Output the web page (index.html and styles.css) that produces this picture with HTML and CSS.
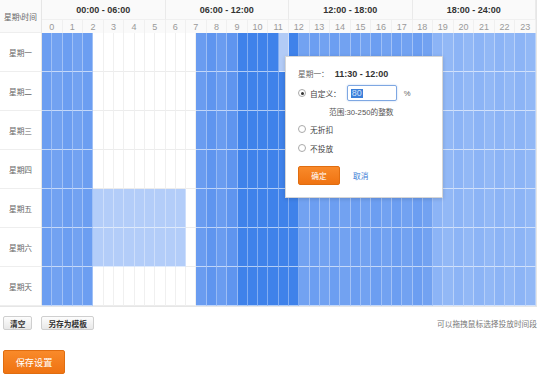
FILE: index.html
```html
<!DOCTYPE html>
<html lang="zh-CN">
<head>
    <meta charset="UTF-8">
    <meta name="viewport" content="width=device-width, initial-scale=1.0">
    <title>投放时间段</title>
    <link rel="stylesheet" href="styles.css">
</head>
<body>
    <div class="scheduler">
        <div class="grid" id="grid">
            <div class="corner">星期\时间</div>
            <div class="range">00:00 - 06:00</div>
            <div class="range">06:00 - 12:00</div>
            <div class="range">12:00 - 18:00</div>
            <div class="range">18:00 - 24:00</div>
        </div>

        <div class="popup">
            <div class="pop-title"><span>星期一：</span><b>11:30 - 12:00</b></div>
            <div class="opt opt-custom">
                <span class="radio checked"></span>
                <span>自定义：</span>
                <span class="fake-input"><span class="sel">80</span></span>
                <span class="pct">%</span>
            </div>
            <div class="range-hint">范围:30-250的整数</div>
            <div class="opt opt-free"><span class="radio"></span><span>无折扣</span></div>
            <div class="opt opt-off"><span class="radio"></span><span>不投放</span></div>
            <div class="pop-actions">
                <button type="button" class="btn-orange btn-ok">确定</button>
                <a href="#" class="link-cancel">取消</a>
            </div>
        </div>
    </div>

    <div class="toolbar">
        <div class="left-group">
            <button type="button" class="btn">清空</button>
            <button type="button" class="btn">另存为模板</button>
        </div>
        <div class="tip">可以拖拽鼠标选择投放时间段</div>
    </div>

    <button type="button" class="btn-orange btn-save">保存设置</button>

    <script>
        var days = ['星期一', '星期二', '星期三', '星期四', '星期五', '星期六', '星期天'];
        var grid = document.getElementById('grid');

        for (var h = 0; h < 24; h++) {
            var hour = document.createElement('div');
            hour.className = 'hour';
            hour.textContent = h;
            grid.appendChild(hour);
        }

        // rough discount levels per half hour
        function level(d, c) {
            if (c <= 4) return 'lv-mid';
            if (c <= 13) return (d == 4 || d == 5) ? 'lv-pale' : '';
            if (c == 14) return '';
            if (c <= 18) return 'lv-mid2';
            if (c <= 24) {
                if (d == 0 && c == 23) return 'lv-picked';
                return 'lv-dark';
            }
            if (c <= 37) return 'lv-mid';
            return 'lv-light';
        }

        for (var d = 0; d < days.length; d++) {
            var label = document.createElement('div');
            label.className = 'day';
            label.textContent = days[d];
            grid.appendChild(label);
            for (var c = 0; c < 48; c++) {
                var cell = document.createElement('div');
                var lv = level(d, c);
                cell.className = 'cell' + (lv ? ' on ' + lv : '') + (c % 2 ? ' odd' : '');
                grid.appendChild(cell);
            }
        }
    </script>
</body>
</html>
```

FILE: styles.css
```css
body {
    margin: 0;
    font-family: "Liberation Sans", "Noto Sans CJK SC", sans-serif;
    font-size: 7.7px;
    color: #555;
    background-color: #fff;
}
.scheduler {
    position: relative;
    width: 537px;
}
.grid {
    display: grid;
    grid-template-columns: 42px repeat(48, 1fr);
    grid-template-rows: 20px 13px repeat(7, 39px);
    border: 1px solid #e6e6e6;
    border-top: none;
    border-left: none;
}
.corner {
    grid-row: 1 / span 2;
    display: flex;
    align-items: center;
    justify-content: center;
    color: #666;
    border-right: 1px solid #e6e6e6;
    border-bottom: 1px solid #eee;
    background-color: #fafafa;
}
.range {
    grid-column: span 12;
    display: flex;
    align-items: center;
    justify-content: center;
    font-size: 9px;
    font-weight: bold;
    color: #333;
    background-color: #fafafa;
    border-right: 1px solid #eaeaea;
    border-bottom: 1px solid #f0f0f0;
}
.hour {
    grid-column: span 2;
    display: flex;
    align-items: center;
    justify-content: center;
    font-size: 9px;
    color: #999;
    background-color: #fafafa;
    border-right: 1px solid #f0f0f0;
}
.day {
    display: flex;
    align-items: center;
    justify-content: center;
    color: #666;
    border-right: 1px solid #e6e6e6;
    border-bottom: 1px solid #eee;
}
.cell {
    box-sizing: border-box;
    border-right: 1px solid #f0f0f0;
    border-bottom: 1px solid #ececec;
}
.cell.on {
    border-right-color: rgba(255,255,255,0.35);
    border-bottom-color: rgba(255,255,255,0.6);
}
.lv-pale { background-color: #b3cdf9; }
.lv-light { background-color: #8cb4f6; }
.lv-light.odd { background-color: #92b8f6; }
.lv-mid { background-color: #6c9ef1; }
.lv-mid.odd { background-color: #72a2f1; }
.lv-mid2 { background-color: #5f95ef; }
.lv-mid2.odd { background-color: #6a9cf0; }
.lv-dark { background-color: #3f82ea; }
.lv-picked { background-color: #b2cbf6; }

/* edit popup */
.popup {
    position: absolute;
    left: 285px;
    top: 56px;
    width: 158px;
    height: 142px;
    box-sizing: border-box;
    padding: 12px 0 0 12px;
    background-color: #fff;
    border: 1px solid #d6d6d6;
    box-shadow: 0 1px 4px rgba(0,0,0,0.15);
}
.pop-title {
    height: 10px;
    line-height: 10px;
    color: #666;
}
.pop-title b {
    margin-left: 6px;
    font-size: 9px;
    color: #333;
}
.opt {
    display: flex;
    align-items: center;
    height: 12px;
    color: #444;
}
.opt-custom {
    height: 16px;
    margin-top: 6px;
}
.opt-free {
    margin-top: 5px;
}
.opt-off {
    margin-top: 7px;
}
.radio {
    position: relative;
    width: 8px;
    height: 8px;
    box-sizing: border-box;
    border: 1px solid #aaa;
    border-radius: 50%;
    margin-right: 4px;
    background-color: #fff;
}
.radio.checked::after {
    content: "";
    position: absolute;
    left: 1.5px;
    top: 1.5px;
    width: 3px;
    height: 3px;
    border-radius: 50%;
    background-color: #333;
}
.fake-input {
    display: flex;
    align-items: center;
    width: 50px;
    height: 16px;
    box-sizing: border-box;
    margin-left: 6px;
    padding-left: 3px;
    border: 1px solid #7ea7e2;
    border-radius: 2px;
    box-shadow: 0 0 2px rgba(80,140,220,0.4);
}
.fake-input .sel {
    font-size: 9px;
    line-height: 9px;
    padding: 0 1px;
    color: #cfe0fb;
    background-color: #3b7fd9;
}
.pct {
    margin-left: 7px;
    color: #666;
}
.range-hint {
    height: 10px;
    line-height: 10px;
    margin-top: 7px;
    padding-left: 31px;
    color: #555;
}
.pop-actions {
    display: flex;
    align-items: center;
    margin-top: 12px;
}
.btn-orange {
    border: 1px solid #e06d10;
    border-radius: 2px;
    color: #fff;
    background: linear-gradient(#f98a2a, #ef7312);
    font-family: inherit;
    cursor: pointer;
}
.btn-ok {
    width: 42px;
    height: 19px;
    padding: 0;
    font-size: 7.7px;
}
.link-cancel {
    margin-left: 13px;
    color: #3a7bd5;
    text-decoration: none;
}

/* bottom */
.toolbar {
    display: flex;
    align-items: center;
    justify-content: space-between;
    width: 537px;
    margin-top: 9px;
    padding-left: 3px;
    box-sizing: border-box;
}
.left-group {
    display: flex;
}
.btn {
    height: 14px;
    padding: 0 6px;
    margin-right: 9px;
    font-family: inherit;
    font-size: 7.7px;
    font-weight: bold;
    color: #333;
    border: 1px solid #cfcfcf;
    border-radius: 2px;
    background: linear-gradient(#fdfdfd, #e8e8e8);
    cursor: pointer;
}
.tip {
    color: #777;
}
.btn-save {
    display: block;
    width: 62px;
    height: 24px;
    margin: 20px 0 0 3px;
    padding: 0;
    font-size: 9.2px;
}
```
